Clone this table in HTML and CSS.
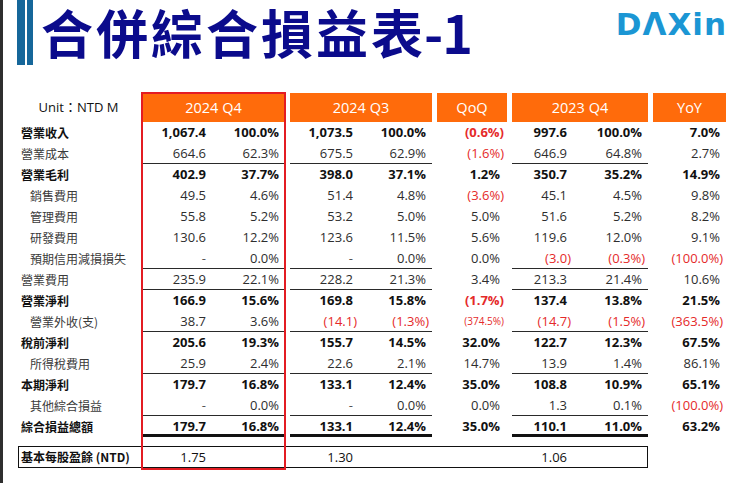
FILE: index.html
```html
<!DOCTYPE html>
<html lang="zh-Hant">
<head>
<meta charset="utf-8">
<title>合併綜合損益表-1</title>
<link rel="stylesheet" href="styles.css">
</head>
<body>
<div class="page">
  <header class="head">
    <div class="bars"><span class="bar b1"></span><span class="bar b2"></span></div>
    <h1 class="title">合併綜合損益表<span class="suffix">-1</span></h1>
    <div class="logo">DΛXin</div>
  </header>

  <section class="report">
    <div class="row hdr">
      <span class="lbl unit">Unit：NTD M</span>
      <span class="hc">2024 Q4</span>
      <span class="hc">2024 Q3</span>
      <span class="hc">QoQ</span>
      <span class="hc">2023 Q4</span>
      <span class="hc">YoY</span>
    </div>

    <div class="row b">
      <span class="lbl">營業收入</span>
      <span class="grp g1"><span class="v">1,067.4</span><span class="p">100.0%</span></span>
      <span class="grp g2"><span class="v">1,073.5</span><span class="p">100.0%</span></span>
      <span class="q n">(0.6%)</span>
      <span class="grp g3"><span class="v">997.6</span><span class="p">100.0%</span></span>
      <span class="y">7.0%</span>
    </div>
    <div class="row ul">
      <span class="lbl">營業成本</span>
      <span class="grp g1"><span class="v">664.6</span><span class="p">62.3%</span></span>
      <span class="grp g2"><span class="v">675.5</span><span class="p">62.9%</span></span>
      <span class="q n">(1.6%)</span>
      <span class="grp g3"><span class="v">646.9</span><span class="p">64.8%</span></span>
      <span class="y">2.7%</span>
    </div>
    <div class="row b">
      <span class="lbl">營業毛利</span>
      <span class="grp g1"><span class="v">402.9</span><span class="p">37.7%</span></span>
      <span class="grp g2"><span class="v">398.0</span><span class="p">37.1%</span></span>
      <span class="q">1.2%</span>
      <span class="grp g3"><span class="v">350.7</span><span class="p">35.2%</span></span>
      <span class="y">14.9%</span>
    </div>
    <div class="row">
      <span class="lbl ind">銷售費用</span>
      <span class="grp g1"><span class="v">49.5</span><span class="p">4.6%</span></span>
      <span class="grp g2"><span class="v">51.4</span><span class="p">4.8%</span></span>
      <span class="q n">(3.6%)</span>
      <span class="grp g3"><span class="v">45.1</span><span class="p">4.5%</span></span>
      <span class="y">9.8%</span>
    </div>
    <div class="row">
      <span class="lbl ind">管理費用</span>
      <span class="grp g1"><span class="v">55.8</span><span class="p">5.2%</span></span>
      <span class="grp g2"><span class="v">53.2</span><span class="p">5.0%</span></span>
      <span class="q">5.0%</span>
      <span class="grp g3"><span class="v">51.6</span><span class="p">5.2%</span></span>
      <span class="y">8.2%</span>
    </div>
    <div class="row">
      <span class="lbl ind">研發費用</span>
      <span class="grp g1"><span class="v">130.6</span><span class="p">12.2%</span></span>
      <span class="grp g2"><span class="v">123.6</span><span class="p">11.5%</span></span>
      <span class="q">5.6%</span>
      <span class="grp g3"><span class="v">119.6</span><span class="p">12.0%</span></span>
      <span class="y">9.1%</span>
    </div>
    <div class="row ul">
      <span class="lbl ind">預期信用減損損失</span>
      <span class="grp g1"><span class="v dash">-</span><span class="p">0.0%</span></span>
      <span class="grp g2"><span class="v dash">-</span><span class="p">0.0%</span></span>
      <span class="q">0.0%</span>
      <span class="grp g3"><span class="v n">(3.0)</span><span class="p n">(0.3%)</span></span>
      <span class="y n">(100.0%)</span>
    </div>
    <div class="row ul">
      <span class="lbl">營業費用</span>
      <span class="grp g1"><span class="v">235.9</span><span class="p">22.1%</span></span>
      <span class="grp g2"><span class="v">228.2</span><span class="p">21.3%</span></span>
      <span class="q">3.4%</span>
      <span class="grp g3"><span class="v">213.3</span><span class="p">21.4%</span></span>
      <span class="y">10.6%</span>
    </div>
    <div class="row b">
      <span class="lbl">營業淨利</span>
      <span class="grp g1"><span class="v">166.9</span><span class="p">15.6%</span></span>
      <span class="grp g2"><span class="v">169.8</span><span class="p">15.8%</span></span>
      <span class="q n">(1.7%)</span>
      <span class="grp g3"><span class="v">137.4</span><span class="p">13.8%</span></span>
      <span class="y">21.5%</span>
    </div>
    <div class="row ul">
      <span class="lbl ind">營業外收(支)</span>
      <span class="grp g1"><span class="v">38.7</span><span class="p">3.6%</span></span>
      <span class="grp g2"><span class="v n">(14.1)</span><span class="p n">(1.3%)</span></span>
      <span class="q n sm">(374.5%)</span>
      <span class="grp g3"><span class="v n">(14.7)</span><span class="p n">(1.5%)</span></span>
      <span class="y n">(363.5%)</span>
    </div>
    <div class="row b">
      <span class="lbl">稅前淨利</span>
      <span class="grp g1"><span class="v">205.6</span><span class="p">19.3%</span></span>
      <span class="grp g2"><span class="v">155.7</span><span class="p">14.5%</span></span>
      <span class="q">32.0%</span>
      <span class="grp g3"><span class="v">122.7</span><span class="p">12.3%</span></span>
      <span class="y">67.5%</span>
    </div>
    <div class="row ul">
      <span class="lbl ind">所得稅費用</span>
      <span class="grp g1"><span class="v">25.9</span><span class="p">2.4%</span></span>
      <span class="grp g2"><span class="v">22.6</span><span class="p">2.1%</span></span>
      <span class="q">14.7%</span>
      <span class="grp g3"><span class="v">13.9</span><span class="p">1.4%</span></span>
      <span class="y">86.1%</span>
    </div>
    <div class="row b">
      <span class="lbl">本期淨利</span>
      <span class="grp g1"><span class="v">179.7</span><span class="p">16.8%</span></span>
      <span class="grp g2"><span class="v">133.1</span><span class="p">12.4%</span></span>
      <span class="q">35.0%</span>
      <span class="grp g3"><span class="v">108.8</span><span class="p">10.9%</span></span>
      <span class="y">65.1%</span>
    </div>
    <div class="row ul">
      <span class="lbl ind">其他綜合損益</span>
      <span class="grp g1"><span class="v dash">-</span><span class="p">0.0%</span></span>
      <span class="grp g2"><span class="v dash">-</span><span class="p">0.0%</span></span>
      <span class="q">0.0%</span>
      <span class="grp g3"><span class="v">1.3</span><span class="p">0.1%</span></span>
      <span class="y n">(100.0%)</span>
    </div>
    <div class="row b tot">
      <span class="lbl">綜合損益總額</span>
      <span class="grp g1"><span class="v">179.7</span><span class="p">16.8%</span></span>
      <span class="grp g2"><span class="v">133.1</span><span class="p">12.4%</span></span>
      <span class="q">35.0%</span>
      <span class="grp g3"><span class="v">110.1</span><span class="p">11.0%</span></span>
      <span class="y">63.2%</span>
    </div>

    <div class="row eps">
      <span class="lbl">基本每股盈餘 (NTD)</span>
      <span class="grp g1"><span class="v">1.75</span><span class="p"></span></span>
      <span class="grp g2"><span class="v">1.30</span><span class="p"></span></span>
      <span class="q"></span>
      <span class="grp g3"><span class="v">1.06</span><span class="p"></span></span>
    </div>

    <div class="focus"></div>
  </section>
</div>
</body>
</html>
```

FILE: styles.css
```css
html, body {
  margin: 0;
  padding: 0;
  background: #ffffff;
}

.page {
  width: 740px;
  height: 483px;
  box-sizing: border-box;
  border-left: 3px solid #2e2e2e;
  overflow: hidden;
  font-family: "Open Sans", "Noto Sans CJK TC", sans-serif;
  color: #333333;
}

/* ---------- header ---------- */
.head {
  display: flex;
  align-items: flex-start;
}

.bars {
  display: flex;
  flex-shrink: 0;
  gap: 2px;
  margin-left: 14px;
  height: 65px;
}

.bar {
  display: block;
  height: 65px;
  background: #16679a;
}
.b1 { width: 8px; }
.b2 { width: 6px; }

.title {
  flex-shrink: 0;
  margin: -6px 0 0 8px;
  padding: 0;
  font-family: "Noto Sans CJK TC", sans-serif;
  font-weight: 700;
  font-size: 52px;
  line-height: normal;
  color: #0b0b8c;
  letter-spacing: 3px;
  white-space: nowrap;
}

.suffix {
  letter-spacing: -1px;
  margin-left: -2px;
}

.logo {
  flex-shrink: 0;
  margin: 6px 13px 0 auto;
  font-family: "DejaVu Sans", sans-serif;
  font-weight: 700;
  font-size: 31px;
  line-height: 36px;
  color: #1b96d4;
  letter-spacing: 1px;
}

/* ---------- report table ---------- */
.report {
  position: relative;
  margin: 24px 0 0 15px;
  width: 708px;
}

.row {
  display: grid;
  grid-template-columns: 119px 143px 142px 70px 136px 73px;
  column-gap: 5px;
  height: 21px;
  line-height: 21px;
  font-size: 13px;
  color: #2e2e2e;
}

.lbl, .hc, .q, .y, .v, .p {
  display: block;
  box-sizing: border-box;
  white-space: nowrap;
}

.grp {
  display: grid;
  height: 21px;
  box-sizing: border-box;
}
.g1 { grid-template-columns: 69px 74px; }
.g2 { grid-template-columns: 68px 74px; }
.g3 { grid-template-columns: 60px 76px; }

.v, .p, .q, .y { text-align: right; }
.v { padding-right: 5px; }
.p { padding-right: 6px; }
.q { padding-right: 7px; }
.y { padding-right: 6px; }

.v.n { padding-right: 1px; }
.p.n, .q.n, .y.n { padding-right: 3px; }

.n { color: #e52a2a; }
.sm { font-size: 10px; }
.dash { color: #555555; }

.lbl {
  font-family: "Noto Sans CJK TC", sans-serif;
  font-size: 12px;
  padding-left: 3px;
  color: #3a3a3a;
}
.lbl.ind { padding-left: 12px; }

.b { color: #111111; font-weight: 700; }
.b .lbl { color: #111111; font-weight: 700; }
.b .n { color: #e52a2a; }

.ul .grp { border-bottom: 1px solid #2a2a2a; }
.tot .grp { border-bottom: 3px solid #111111; }

/* header row */
.hdr {
  height: 29px;
  line-height: 29px;
}
.hc {
  background: #ff6b0b;
  color: #ffffff;
  font-size: 14.5px;
  text-align: center;
}
.unit {
  font-family: "Open Sans", "Noto Sans CJK TC", sans-serif;
  font-size: 13px;
  color: #111111;
  text-align: center;
  padding-left: 2px;
}

/* EPS row */
.eps {
  grid-template-columns: 119px 143px 142px 70px 136px;
  width: 630px;
  height: 22px;
  line-height: 22px;
  margin-top: 9px;
  outline: 1px solid #111111;
  outline-offset: -1px;
  color: #111111;
}
.eps .grp { height: 22px; }
.eps .lbl { font-weight: 700; color: #111111; }

/* highlight frame drawn over the 2024 Q4 column */
.focus {
  position: absolute;
  left: 123px;
  top: -1px;
  width: 145px;
  height: 378px;
  box-sizing: border-box;
  border: 2px solid #e31c23;
  pointer-events: none;
}
```
